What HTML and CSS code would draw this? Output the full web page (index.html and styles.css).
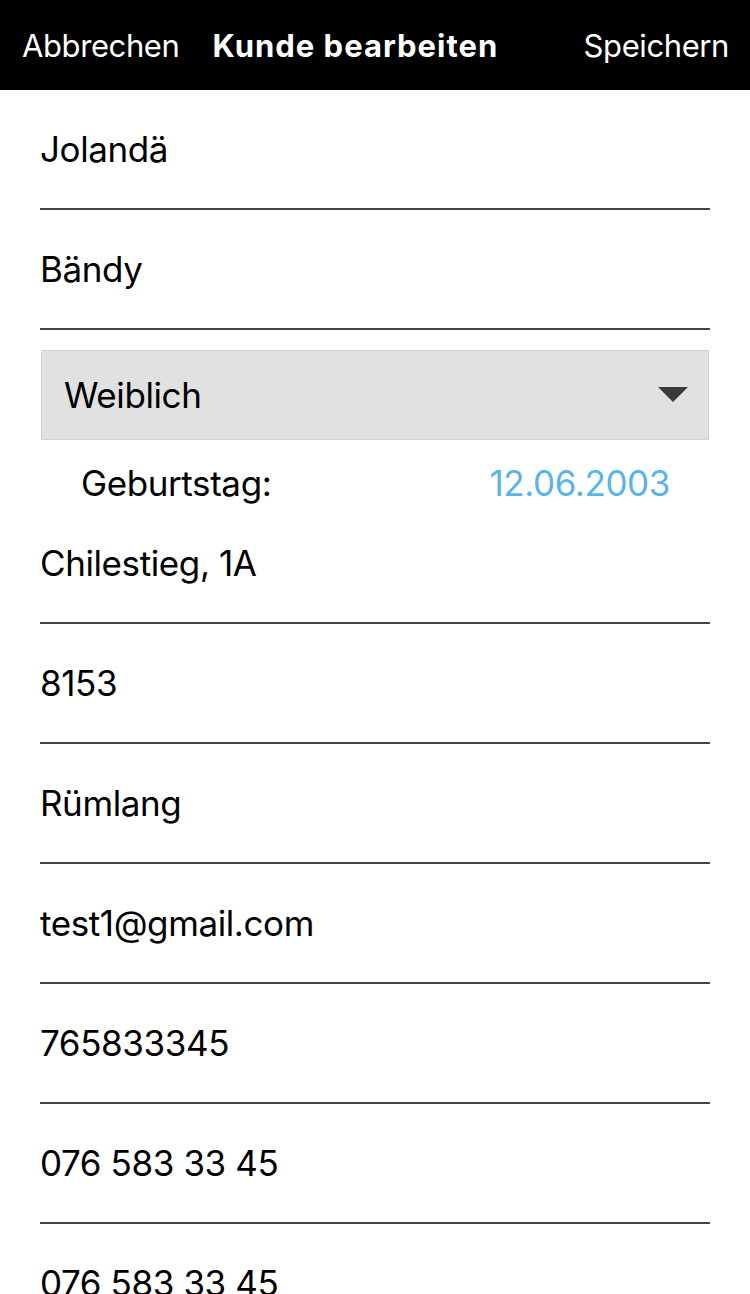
FILE: index.html
```html
<!DOCTYPE html>
<html lang="de">
<head>
<meta charset="utf-8">
<title>Kunde bearbeiten</title>
<link rel="stylesheet" href="styles.css">
</head>
<body>
<header class="navbar">
  <span class="nav-btn">Abbrechen</span>
  <span class="nav-title">Kunde bearbeiten</span>
  <span class="nav-btn nav-save">Speichern</span>
</header>
<main class="form">
  <div class="row">Jolandä</div>
  <div class="row">Bändy</div>
  <div class="picker">
    <span>Weiblich</span>
    <svg class="arrow" width="30" height="16" viewBox="0 0 30 16"><polygon points="0,0 30,0 15,15" fill="#3a3a3e"/></svg>
  </div>
  <div class="birthday">
    <span>Geburtstag:</span>
    <span class="date">12.06.2003</span>
  </div>
  <div class="row">Chilestieg, 1A</div>
  <div class="row">8153</div>
  <div class="row">Rümlang</div>
  <div class="row">test1@gmail.com</div>
  <div class="row">765833345</div>
  <div class="row">076 583 33 45</div>
  <div class="row">076 583 33 45</div>
</main>
</body>
</html>
```

FILE: styles.css
```css
* { box-sizing: border-box; }
html, body { margin: 0; padding: 0; background: #fff; }
body {
  font-family: Inter, "Noto Sans", sans-serif;
  color: #000;
  overflow: hidden;
  height: 1294px;
}
.navbar {
  height: 90px;
  background: #000;
  color: #fff;
  display: flex;
  align-items: center;
  padding: 0 21px 0 22px;
  font-size: 31px;
  letter-spacing: -0.4px;
}
.nav-title {
  font-weight: 700;
  margin-left: 33px;
  letter-spacing: 1px;
}
.nav-save { margin-left: auto; }
.form {
  padding: 0 40px;
  font-size: 35px;
  letter-spacing: -0.4px;
}
.row {
  height: 120px;
  border-bottom: 2px solid #444;
  display: flex;
  align-items: center;
}
.picker {
  margin: 20px 1px 0;
  height: 90px;
  background: #e1e1e1;
  border: 1px solid #d2d2d2;
  display: flex;
  align-items: center;
  justify-content: space-between;
  padding: 0 20px 0 22px;
}
.arrow { display: block; }
.birthday {
  height: 64px;
  padding: 22px 40px 0 41px;
  display: flex;
  align-items: center;
  justify-content: space-between;
}
.date { color: #5ab5e4; }
```
